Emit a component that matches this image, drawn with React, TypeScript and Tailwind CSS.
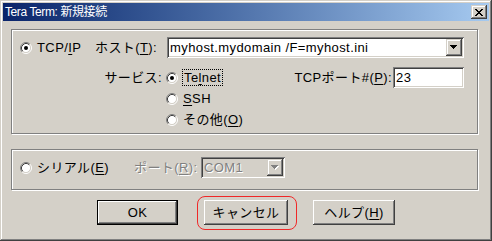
import type { ReactNode } from "react";

const raised =
  "shadow-[inset_-1px_-1px_#404040,inset_1px_1px_#d4d0c8,inset_-2px_-2px_#808080,inset_2px_2px_#ffffff]";
const sunken =
  "shadow-[inset_1px_1px_#808080,inset_-1px_-1px_#ffffff,inset_2px_2px_#404040,inset_-2px_-2px_#d4d0c8]";
const pushButton =
  "shadow-[inset_-1px_-1px_#404040,inset_1px_1px_#ffffff,inset_-2px_-2px_#808080,inset_2px_2px_#d4d0c8]";

function Radio({ checked = false }: { checked?: boolean }) {
  return (
    <svg width="12" height="12" viewBox="0 0 12 12" className="shrink-0">
      <circle cx="6" cy="6" r="4.5" fill="#ffffff" />
      <path d="M2.11 9.89 A5.5 5.5 0 0 1 9.89 2.11" fill="none" stroke="#808080" />
      <path d="M9.89 2.11 A5.5 5.5 0 0 1 2.11 9.89" fill="none" stroke="#ffffff" />
      <path d="M2.82 9.18 A4.5 4.5 0 0 1 9.18 2.82" fill="none" stroke="#404040" />
      <path d="M9.18 2.82 A4.5 4.5 0 0 1 2.82 9.18" fill="none" stroke="#d4d0c8" />
      {checked && <circle cx="6" cy="6" r="2" fill="#000000" />}
    </svg>
  );
}

function Arrow({ disabled = false }: { disabled?: boolean }) {
  const rows = (dx: number, dy: number, fill: string) => (
    <g fill={fill}>
      <rect x={0 + dx} y={0 + dy} width="7" height="1" />
      <rect x={1 + dx} y={1 + dy} width="5" height="1" />
      <rect x={2 + dx} y={2 + dy} width="3" height="1" />
      <rect x={3 + dx} y={3 + dy} width="1" height="1" />
    </g>
  );
  return (
    <svg width="8" height="5" viewBox="0 0 8 5" shapeRendering="crispEdges">
      {disabled && rows(1, 1, "#ffffff")}
      {rows(0, 0, disabled ? "#808080" : "#000000")}
    </svg>
  );
}

function Combo({ value, disabled = false }: { value: string; disabled?: boolean }) {
  return (
    <div
      className={`flex h-[21px] flex-1 items-stretch p-[2px] ${sunken} ${
        disabled ? "bg-[#d4d0c8]" : "bg-white"
      }`}
    >
      <span
        className={`flex flex-1 items-center pl-[1px] ${
          disabled ? "text-[#808080] [text-shadow:1px_1px_0_#ffffff]" : ""
        }`}
      >
        {value}
      </span>
      <div className={`flex w-[16px] items-center justify-center bg-[#d4d0c8] ${raised}`}>
        <Arrow disabled={disabled} />
      </div>
    </div>
  );
}

function Key({ children }: { children: ReactNode }) {
  return <span className="underline decoration-1 underline-offset-[2px]">{children}</span>;
}

function CloseGlyph() {
  const rows = [
    [0, 1, 6, 7],
    [1, 2, 5, 6],
    [2, 3, 4, 5],
    [3, 4],
    [2, 3, 4, 5],
    [1, 2, 5, 6],
    [0, 1, 6, 7],
  ];
  return (
    <svg width="8" height="7" viewBox="0 0 8 7" shapeRendering="crispEdges">
      {rows.map((xs, y) =>
        xs.map((x) => <rect key={`${y}-${x}`} x={x} y={y} width="1" height="1" fill="#000" />)
      )}
    </svg>
  );
}

export default function App() {
  return (
    <div
      className={`h-[241px] w-[492px] select-none bg-[#d4d0c8] px-[3px] pt-[3px] font-['Liberation_Sans','Noto_Sans_CJK_JP',sans-serif] text-[13px] tracking-[0.4px] text-black ${raised}`}
    >
      {/* title bar */}
      <div className="flex h-[18px] items-center bg-linear-to-r from-[#0a246a] to-[#a6caf0] pl-[2px] pr-[2px]">
        <span className="text-[12px] tracking-[-0.4px] text-white">Tera Term: 新規接続</span>
        <div className={`ml-auto flex h-[14px] w-[16px] items-center justify-center bg-[#d4d0c8] ${raised}`}>
          <CloseGlyph />
        </div>
      </div>

      {/* TCP/IP group */}
      <div className="ml-[8px] mt-[8px] h-[105px] w-[467px] border border-[#808080] pr-[13px] pt-[7px] shadow-[inset_1px_1px_#ffffff,1px_1px_#ffffff]">
        <div className="flex h-[21px] items-center">
          <div className="flex w-[83px] items-center gap-[5px] pl-[8px]">
            <Radio checked />
            <span>
              TCP/<Key>I</Key>P
            </span>
          </div>
          <span className="w-[72px]">
            ホスト(<Key>T</Key>):
          </span>
          <Combo value="myhost.mydomain /F=myhost.ini" />
        </div>

        <div className="mt-[9px] flex h-[21px] items-center">
          <span className="w-[154px] pr-[4px] text-right">サービス:</span>
          <Radio checked />
          <span className="ml-[4px] border border-dotted border-black px-[1px] leading-[15px]">
            Te<Key>l</Key>net
          </span>
          <div className="ml-auto flex items-center gap-[1px]">
            <span>
              TCPポート#(<Key>P</Key>):
            </span>
            <div className={`flex h-[21px] w-[71px] items-center bg-white pl-[3px] ${sunken}`}>23</div>
          </div>
        </div>

        <div className="flex h-[21px] items-center pl-[154px]">
          <Radio />
          <span className="ml-[5px]">
            <Key>S</Key>SH
          </span>
        </div>

        <div className="flex h-[21px] items-center pl-[154px]">
          <Radio />
          <span className="ml-[5px]">
            その他(<Key>O</Key>)
          </span>
        </div>
      </div>

      {/* serial group */}
      <div className="ml-[8px] mt-[15px] flex h-[41px] w-[467px] items-start border border-[#808080] pt-[7px] shadow-[inset_1px_1px_#ffffff,1px_1px_#ffffff]">
        <div className="flex h-[21px] w-[122px] items-center gap-[5px] pl-[8px]">
          <Radio />
          <span>
            シリアル(<Key>E</Key>)
          </span>
        </div>
        <span className="flex h-[21px] w-[67px] items-center text-[#808080] [text-shadow:1px_1px_0_#ffffff]">
          ポート(<Key>R</Key>):
        </span>
        <div className="flex w-[84px]">
          <Combo value="COM1" disabled />
        </div>
      </div>

      {/* buttons */}
      <div className="mt-[10px] flex h-[25px] pl-[94px]">
        <button className={`h-[25px] w-[81px] border border-black bg-[#d4d0c8] ${pushButton}`}>OK</button>
        <div className="relative ml-[26px]">
          <button className={`h-[25px] w-[84px] bg-[#d4d0c8] ${pushButton}`}>キャンセル</button>
          <div className="pointer-events-none absolute -bottom-[5px] -left-[7px] -right-[9px] -top-[4px] rounded-[8px] border border-[#f02828]" />
        </div>
        <button className={`ml-[25px] h-[25px] w-[82px] bg-[#d4d0c8] ${pushButton}`}>
          ヘルプ(<Key>H</Key>)
        </button>
      </div>
    </div>
  );
}
